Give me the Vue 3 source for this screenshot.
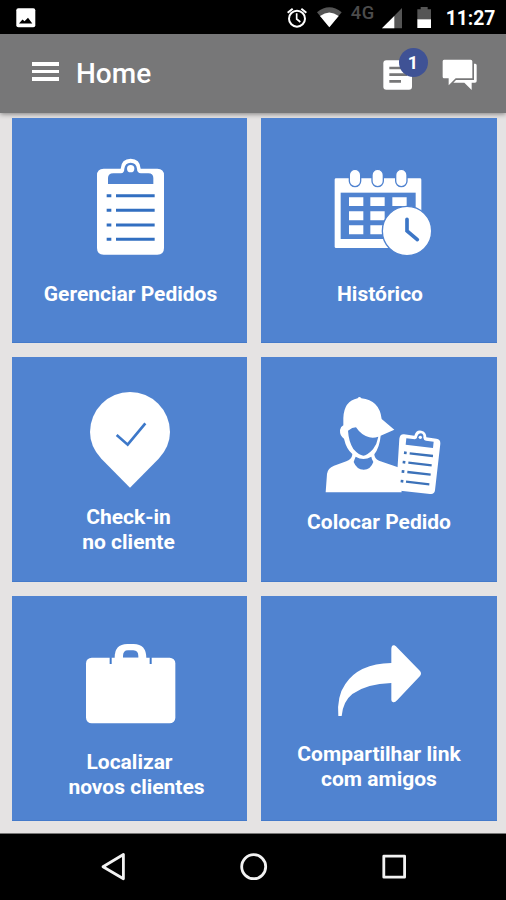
<!--
    Home screen of the sales app
-->
<script setup>
    import { ref } from 'vue';

    const time = ref('11:27');
    const notifications = ref(1);
</script>

<template>
    <div class="phone">
        <!-- Status bar -->
        <div class="statusbar">
            <svg class="picture" width="20" height="20" viewBox="0 0 20 20">
                <rect x="0.3" y="0.3" width="19" height="19" rx="2" fill="#fff" />
                <path d="M3 15.5L6.5 11.5L8.5 13.3L12 9.8L16.3 15.5Z" fill="#000" />
            </svg>
            <svg width="212" height="34" viewBox="0 0 636 102">
                <g transform="translate(-99 0)">
                    <g fill="none" stroke="#fff">
                        <circle cx="132" cy="56" r="24" stroke-width="6" />
                        <path d="M131 40V57L142 66" stroke-width="5" />
                        <path d="M104 38L119 26M145 26L160 38" stroke-width="6" />
                    </g>
                    <path d="M192 37Q229 7 266 37L229 82Z" fill="#555" />
                    <path d="M201 48Q229 27 257 48L229 82Z" fill="#fff" />
                    <text class="network" x="293" y="56">4G</text>
                    <path d="M387 85L447 24V85Z" fill="#555" />
                    <path d="M387 85L424 48V85Z" fill="#fff" />
                    <path d="M493 28H503V21H524V28H534V60H493Z" fill="#555" />
                    <path d="M493 58H534V84H493Z" fill="#fff" />
                    <text class="clock" x="578" y="75">{{ time }}</text>
                </g>
            </svg>
        </div>

        <!-- Header -->
        <header class="header">
            <button class="menu" aria-label="Menu">
                <span></span>
                <span></span>
                <span></span>
            </button>
            <h1>Home</h1>
            <div class="notes">
                <svg width="30" height="31" viewBox="390 180 90 93">
                    <rect x="391" y="181" width="86" height="88" rx="9" fill="#fff" />
                    <path d="M409 204H444M409 224H462M409 244H444" stroke="#777778" stroke-width="8" />
                </svg>
                <span class="badge">{{ notifications }}</span>
            </div>
            <svg class="chat" width="36" height="32" viewBox="567 178 108 96">
                <path d="M573 180H653Q658 180 658 185V236H608L587 257V236H573Q569 236 569 231V185Q569 180 573 180Z" fill="#fff" />
                <path d="M663 192H667Q671 192 671 197V244Q671 249 666 249H656V271L634 249H601L609 241H663Z" fill="#fff" />
            </svg>
        </header>

        <!-- Tiles -->
        <main class="tiles">
            <button class="tile">
                <svg width="235" height="163" viewBox="36 24 705 489">
                    <path d="M311 176H362Q364 146 392 146Q420 146 422 176H472Q492 176 492 196V414Q492 434 472 434H311Q291 434 291 414V196Q291 176 311 176Z" fill="#fff" />
                    <path d="M324 222V204Q324 190 340 190H363Q373 189 373 176Q375 158 392 158Q409 158 411 176Q411 189 423 190H445Q460 190 460 204V222Z" fill="#5083d0" />
                    <circle cx="392" cy="176" r="11" fill="#fff" />
                    <path d="M320 257H334M320 301H334M320 345H334M320 388H334" stroke="#326fc1" stroke-width="9" />
                    <path d="M348 257H464M348 301H464M348 345H464M348 388H464" stroke="#326fc1" stroke-width="9" />
                </svg>
                <span class="label right">Gerenciar Pedidos</span>
            </button>

            <button class="tile">
                <svg width="236" height="163" viewBox="24 24 708 489">
                    <rect x="245" y="205" width="260" height="209" rx="4" fill="#fff" />
                    <rect x="263" y="248" width="225" height="139" fill="#5083d0" />
                    <g fill="#fff" stroke="#5083d0" stroke-width="4">
                        <rect x="289" y="178" width="34" height="52" rx="17" />
                        <rect x="357" y="178" width="34" height="52" rx="17" />
                        <rect x="428" y="178" width="34" height="52" rx="17" />
                    </g>
                    <path d="M288 262h43v26h-43ZM352 262h43v26h-43ZM418 262h43v26h-43ZM288 304h43v27h-43ZM352 304h43v27h-43ZM288 346h43v27h-43ZM352 346h43v27h-43Z" fill="#fff" />
                    <circle cx="462" cy="363" r="74" fill="#fff" stroke="#5083d0" stroke-width="4" />
                    <path d="M462 328V363L493 389" fill="none" stroke="#3c76c6" stroke-width="11" stroke-linecap="round" />
                </svg>
                <span class="label right">Histórico</span>
            </button>

            <button class="tile">
                <svg width="235" height="147" viewBox="36 21 705 441">
                    <path d="M390 413L304 326Q270 290 270 246A120 120 0 0 1 510 246Q510 290 476 326Z" fill="#fff" />
                    <path d="M350 255L383 284L436 220" fill="none" stroke="#3d78c9" stroke-width="8" />
                </svg>
                <span class="label left">Check-in<br>no cliente</span>
            </button>

            <button class="tile">
                <svg width="236" height="152" viewBox="24 21 708 456">
                    <!-- customer with cap -->
                    <path d="M218 427L222 372Q224 354 243 347L280 334Q298 328 298 312Q280 297 273 266Q260 258 261 240Q263 230 271 226V204Q273 153 314 145Q319 137 325 145Q379 150 386 207L424 239Q408 246 383 257Q380 291 364 313Q364 326 378 332L435 352L446 427Z" fill="#fff" />
                    <path d="M285 242Q298 232 309 232Q325 256 349 262Q362 265 376 260Q372 282 360 298Q342 317 331 317Q318 316 301 297Q287 274 285 242Z" fill="#5083d0" />
                    <path d="M302 336Q306 324 308 320Q331 334 355 320Q356 328 361 336Q353 359 332 359Q311 359 302 336Z" fill="#5083d0" />
                    <!-- clipboard -->
                    <path d="M453 253L484 257Q489 239 505 242Q520 245 520 262L550 266Q563 268 562 281L546 421Q544 434 531 432L442 422Q430 420 430 410L439 266Q441 252 453 253Z" fill="#fff" />
                    <path d="M458 284L460 265L486 268Q493 266 493 259Q496 250 504 250Q513 252 511 263Q512 271 519 272L542 275L540 294Z" fill="#5083d0" />
                    <circle cx="502" cy="262" r="5" fill="#fff" />
                    <path d="M453 308L461 309M449 336L457 337M446 364L454 365M443 393L451 394" stroke="#3c72b9" stroke-width="8" />
                    <path d="M470 310L540 318M466 338L536 346M463 366L533 374M459 395L529 403" stroke="#3c72b9" stroke-width="7" />
                </svg>
                <span class="label">Colocar Pedido</span>
            </button>

            <button class="tile">
                <svg width="235" height="153" viewBox="36 18 705 459">
                    <path d="M344 205Q343 162 382 162H401Q439 162 439 205Z" fill="#fff" />
                    <path d="M369 203V198Q369 181 384 181H400Q415 182 415 198V203Z" fill="#5083d0" />
                    <rect x="258" y="203" width="268" height="197" rx="17" fill="#fff" />
                    <path d="M332 202V222M452 202V222" stroke="#4079cb" stroke-width="6" />
                </svg>
                <span class="label">Localizar<br><i class="indent"></i>novos clientes</span>
            </button>

            <button class="tile">
                <svg width="236" height="145" viewBox="24 18 708 435">
                    <path d="M256 378Q251 319 277 282Q317 221 415 219V176Q416 164 424 166Q429 168 433 173L501 243Q507 251 501 258L433 330Q425 339 419 336Q415 334 415 329V279Q341 281 298 312Q270 334 266 378Z" fill="#fff" />
                </svg>
                <span class="label">Compartilhar link<br>com amigos</span>
            </button>
        </main>

        <!-- Android navigation -->
        <nav class="navbar">
            <svg width="506" height="66" viewBox="0 834 506 66" fill="none" stroke="#f2f2f2" stroke-width="2.8" stroke-linejoin="round">
                <path d="M103 866.8L123.4 854.5V878.8Z" />
                <circle cx="253.7" cy="866.7" r="12" />
                <rect x="383.8" y="856.2" width="20.8" height="21" />
            </svg>
        </nav>
    </div>
</template>

<style>
    body {
        margin: 0;
        background-color: #000;
    }
</style>

<style scoped>
    .phone {
        display: flex;
        flex-direction: column;
        width: 506px;
        height: 900px;
        overflow: hidden;
        background-color: #e5e3e3;
        font-family: Roboto, "Liberation Sans", sans-serif;
        color: #fff;
    }

    button {
        border: none;
        padding: 0;
        font-family: inherit;
        color: inherit;
        cursor: pointer;
    }

    svg {
        display: block;
        flex: none;
    }

    .statusbar {
        display: flex;
        justify-content: space-between;
        align-items: flex-start;
        height: 34px;
        padding-right: 8px;
        background-color: #000;
    }

    .picture {
        margin: 7.5px 0 0 16px;
    }

    .network {
        font-size: 55px;
        font-weight: 500;
        letter-spacing: 2px;
        fill: #4c4c4c;
    }

    .clock {
        font-size: 58px;
        font-weight: 700;
        fill: #fff;
    }

    .header {
        display: flex;
        align-items: flex-start;
        flex: none;
        height: 79px;
        background-color: #777778;
        box-shadow: 0 1px 5px rgba(0, 0, 0, 0.45);
    }

    .menu {
        display: flex;
        flex-direction: column;
        gap: 4px;
        width: 27px;
        margin: 28px 0 0 32px;
        background: none;
    }

    .menu span {
        height: 3.6px;
        background-color: #fff;
    }

    .header h1 {
        flex: 1;
        margin: 23px 0 0 17px;
        font-size: 28px;
        line-height: 34px;
        font-weight: 500;
    }

    .notes {
        position: relative;
        margin-top: 26px;
    }

    .badge {
        position: absolute;
        top: -12px;
        left: 15.5px;
        width: 29px;
        height: 29px;
        border-radius: 50%;
        background-color: #3f5295;
        font-size: 18px;
        line-height: 30px;
        font-weight: 700;
        text-align: center;
    }

    .chat {
        margin: 25px 28px 0 29px;
    }

    .tiles {
        display: grid;
        flex: 1;
        grid-template-columns: 235px 236px;
        grid-auto-rows: 225px;
        gap: 14px;
        padding: 5px 0 0 12px;
    }

    .tile {
        display: flex;
        flex-direction: column;
        align-items: center;
        background-color: #5083d0;
        box-shadow: inset 0 -1px 0 #447aca;
    }

    .label {
        margin-top: 0.5px;
        font-size: 21px;
        line-height: 25.3px;
        font-weight: 700;
        text-align: center;
    }

    .label.right {
        padding-left: 2px;
    }

    .label.left {
        padding-right: 2px;
    }

    .indent {
        display: inline-block;
        width: 14px;
    }

    .navbar {
        flex: none;
        height: 66px;
        border-top: 1px solid #777;
        background-color: #000;
    }
</style>
